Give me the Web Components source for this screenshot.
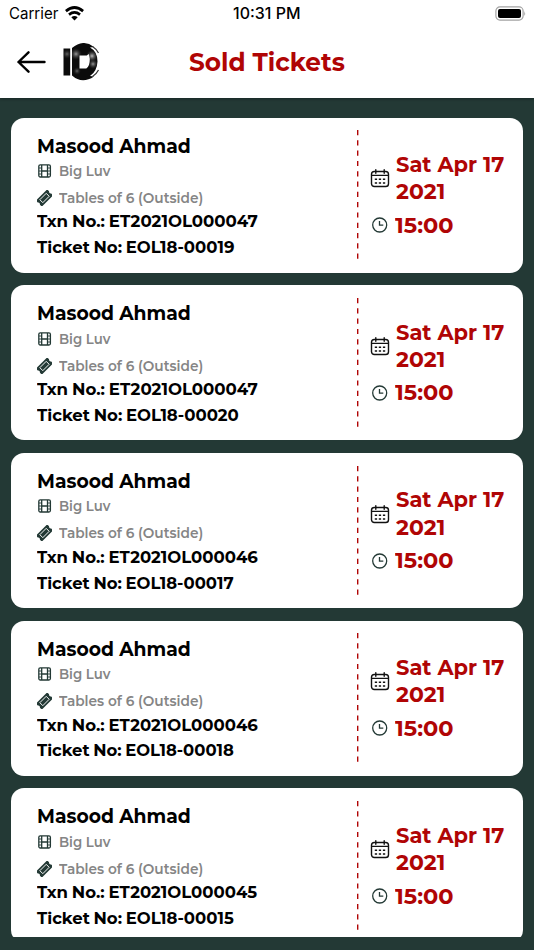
<!DOCTYPE html>
<html lang="en">
<head>
<meta charset="utf-8">
<title>Sold Tickets</title>
<style>
    html, body { margin: 0; height: 100%; overflow: hidden; }
    body { font-family: Montserrat, Inter, sans-serif; background: #233935; color: #000; }
</style>
</head>
<body>
<sold-tickets></sold-tickets>

<template id="app">
    <style>
        :host { display: flex; flex-direction: column; height: 950px; width: 534px; background: #233935; }
        header { height: 98px; background: #fff; flex: none; box-shadow: 0 1px 3px #0005; z-index: 1; }
        main { flex: none; height: 839px; overflow: hidden; box-sizing: border-box; padding: 19.7px 11px 0; }
        .list { display: flex; flex-direction: column; gap: 12.7px; height: 819.3px; overflow: hidden; border-radius: 0 0 3px 3px; }
    </style>
    <header>
        <status-bar></status-bar>
        <nav-bar><fit-text width="156">Sold Tickets</fit-text></nav-bar>
    </header>
    <main><div class="list"></div></main>
</template>

<template id="status">
    <style>
        :host { display: grid; grid-template-columns: 1fr auto 1fr; align-items: center; height: 28px; padding: 0 9px 0 9px; font: 15.5px/28px Inter, sans-serif; }
        div { display: flex; align-items: center; gap: 6px; }
        b { font-weight: 500; display: flex; }
        svg { display: block; }
        .end { justify-content: flex-end; padding-bottom: 2px; margin-right: -1px; }
    </style>
    <div>
        <fit-text width="49.5">Carrier</fit-text>
        <svg width="19" height="15" viewBox="0 0 19 15" fill="none" stroke="#000" stroke-width="2.7" style="margin-top:-2px">
            <path d="M.9 5.1Q9.5-2.1 18.1 5.1M4 8.6q5.5-4.3 11 0"/>
            <path d="M9.5 14.4 6.3 11.2q3.2-2.3 6.4 0z" fill="#000" stroke="none"/>
        </svg>
    </div>
    <b><fit-text width="68">10:31 PM</fit-text></b>
    <div class="end">
        <svg width="31" height="15" viewBox="0 0 31 15">
            <rect x=".9" y=".9" width="27.2" height="13.2" rx="4" fill="#fff" stroke="#a3a3a3" stroke-width="1.2"/>
            <rect x="3" y="3" width="23" height="9" rx="2"/>
            <path d="M29.3 5q1.6 2.5 0 5z" fill="#999"/>
        </svg>
    </div>
</template>

<template id="nav">
    <style>
        :host { display: grid; grid-template-columns: 1fr auto 1fr; align-items: center; height: 68px; padding: 0 17px; font-weight: 700; font-size: 25.2px; color: #b00505; }
        div { display: flex; align-items: center; gap: 17px; }
        svg { display: block; flex: none; }
    </style>
    <div>
        <svg width="29" height="22" viewBox="0 0 29 22" fill="none" stroke="#000" stroke-width="2.4" stroke-linecap="round" stroke-linejoin="round">
            <path d="M27.5 11H1.5M11.5 1.3 1.5 11l10 9.7"/>
        </svg>
        <svg width="37" height="38" viewBox="0 0 37 38">
            <defs>
                <radialGradient id="smoke"><stop stop-color="#bbb"/><stop offset="1" stop-color="#333" stop-opacity="0"/></radialGradient>
                <clipPath id="mark"><path d="M.5 5.5h6.7v27H.5zM9 5Q20-4.5 31 4l-4 .5q7.5 4 7.500 14-.5 10-7.500 14.500l4 .5Q19 41.500 9 32.5z"/></clipPath>
            </defs>
            <g clip-path="url(#mark)">
                <path fill="#0b0b0b" d="M0 0h37v38H0z"/>
                <circle cx="4" cy="11" r="5" fill="url(#smoke)" opacity=".5"/>
                <circle cx="13" cy="11" r="6" fill="url(#smoke)" opacity=".8"/>
                <circle cx="29" cy="13" r="6" fill="url(#smoke)"/>
                <circle cx="30" cy="21" r="5" fill="url(#smoke)" opacity=".8"/>
                <circle cx="14" cy="28" r="4" fill="url(#smoke)" opacity=".5"/>
            </g>
            <path d="M16.5 12.5h7.3l2-1.5 1 5q0 7.5-3.5 9.5h-6.8z" fill="#fff"/>
            <path d="M29.500 3.500q4 2.500 6 6.500M29.500 33.500q4-2.500 6-6.500" fill="none" stroke="#333" stroke-width="1.2"/>
        </svg>
    </div>
    <slot></slot>
</template>

<template id="card">
    <style>
        :host { display: flex; height: 155px; flex: none; box-sizing: border-box; padding: 0 0 0 26px; background: #fff; border-radius: 13px; font-weight: 690; }
        .info { width: 320px; padding-top: 16px; }
        .info div { display: flex; align-items: center; }
        .name { height: 24px; font-size: 19.3px; }
        .event { height: 26.4px; }
        .type { height: 28px; }
        .info .event, .info .type { font-size: 14.2px; font-weight: 580; color: #858585; gap: 6.5px; padding-bottom: 1px; margin-bottom: -1px; }
        .txn { height: 18.8px; font-size: 16.5px; word-spacing: -.8px; }
        .no { height: 32.6px; font-size: 16.5px; word-spacing: -1px; }
        .rule { margin: 12.6px -1px 0 0; }
        .when { padding: 32.8px 0 0 12px; color: #b00505; font-size: 21.7px; }
        .when > div { display: flex; align-items: center; gap: 6px; }
        .date { display: flex; flex-direction: column; }
        .date span { display: flex; align-items: center; height: 27.2px; }
        .time { height: 39.8px; }
        svg { display: block; flex: none; }
    </style>
    <div class="info">
        <div class="name"></div>
        <div class="event">
            <svg width="15" height="14" viewBox="0 0 15 14" fill="none" stroke="#233935" stroke-width="1.3">
                <rect x="1.8" y=".8" width="11.6" height="12.2" rx="1.5"/>
                <path d="M4.7 1v12M10.5 1v12M4.7 7h5.8"/>
                <path stroke-width=".9" d="M2 4h2.7M2 7h2.7M2 10h2.7M10.5 4h2.7M10.5 7h2.7M10.5 10h2.7"/>
            </svg>
        </div>
        <div class="type">
            <svg width="15" height="16" viewBox="0 0 15 16">
                <g transform="translate(7.5 8) rotate(-45)">
                    <path fill="#233935" d="M-8-4.2H8v2.7q-2 1.5 0 3v2.7H-8V1.5q2-1.5 0-3z"/>
                    <path d="M-4.5-2.1h9v4.2h-9z" fill="none" stroke="#fff" stroke-width=".9"/>
                </g>
            </svg>
        </div>
        <div class="txn"></div>
        <div class="no"></div>
    </div>
    <svg class="rule" width="2" height="130" viewBox="0 0 2 130">
        <path d="M.7 0v130" stroke="#b00505" stroke-width="1.4" stroke-dasharray="5.2 5.1"/>
    </svg>
    <div class="when">
        <div>
            <svg width="20" height="19" viewBox="0 0 20 19" fill="none" stroke="#111" stroke-width="1.4" stroke-linecap="round" style="margin-top:2px">
                <rect x="1.5" y="2.5" width="17" height="15" rx="2.8"/>
                <path d="M5.8.8v3.4M14.2.8v3.4M2 6.4h16"/>
                <path stroke-linecap="butt" d="M4.8 10.2h2.3M8.8 10.2h2.3M12.9 10.2h2.3M4.8 14h2.3M8.8 14h2.3M12.9 14h2.3"/>
            </svg>
            <div class="date"></div>
        </div>
        <div class="time">
            <svg width="19" height="17" viewBox="0 0 19 17" fill="none" stroke="#233935" stroke-width="1.3">
                <circle cx="9.7" cy="9" r="7"/>
                <path d="M9.5 5v4.2h3.8"/>
            </svg>
        </div>
    </div>
</template>

<script>
    const tickets = [
        ["ET2021OL000047", "EOL18-00019", 197],
        ["ET2021OL000047", "EOL18-00020", 201.5],
        ["ET2021OL000046", "EOL18-00017", 196.5],
        ["ET2021OL000046", "EOL18-00018", 197],
        ["ET2021OL000045", "EOL18-00015", 197],
    ];

    class Base extends HTMLElement {
        connectedCallback() {
            if (this.shadowRoot) return;
            const root = this.attachShadow({mode: "open"});
            root.append(document.getElementById(this.constructor.template).content.cloneNode(true));
            this.render(root);
        }

        render() {}
    }

    // stretches a single line of text to a fixed width
    customElements.define("fit-text", class extends HTMLElement {
        connectedCallback() {
            if (this.shadowRoot) return;
            const root = this.attachShadow({mode: "open"});
            const width = +this.getAttribute("width");
            root.innerHTML = `<style>:host{display:block;width:${width}px;white-space:nowrap}span{display:inline-block;transform-origin:0 50%}</style><span><slot></slot></span>`;
            const fit = () => {
                const span = root.querySelector("span");
                if (span.offsetWidth) span.style.transform = `scaleX(${width / span.offsetWidth})`;
            };
            new ResizeObserver(fit).observe(root.querySelector("span"));
            fit();
        }
    });

    customElements.define("status-bar", class extends Base {
        static template = "status";
    });

    customElements.define("nav-bar", class extends Base {
        static template = "nav";
    });

    customElements.define("ticket-card", class extends Base {
        static template = "card";

        render(root) {
            const text = (value, width) => {
                const el = document.createElement("fit-text");
                el.setAttribute("width", width);
                el.textContent = value;
                return el;
            };
            const line = (el) => {
                const span = document.createElement("span");
                span.append(el);
                return span;
            };
            const $ = (s) => root.querySelector(s);
            $(".name").append(text("Masood Ahmad", 153.5));
            $(".event").append(text("Big Luv", 51.5));
            $(".type").append(text("Tables of 6 (Outside)", 144));
            $(".txn").append(text("Txn No.: " + this.getAttribute("txn"), 220.5));
            $(".no").append(text("Ticket No: " + this.getAttribute("no"), this.getAttribute("no-width")));
            $(".date").append(line(text("Sat Apr 17", 108.5)), line(text("2021", 49.5)));
            $(".time").append(text("15:00", 59));
        }
    });

    customElements.define("sold-tickets", class extends Base {
        static template = "app";

        render(root) {
            for (const [txn, no, width] of tickets) {
                const card = document.createElement("ticket-card");
                card.setAttribute("txn", txn);
                card.setAttribute("no", no);
                card.setAttribute("no-width", width);
                root.querySelector(".list").append(card);
            }
        }
    });
</script>
</body>
</html>
